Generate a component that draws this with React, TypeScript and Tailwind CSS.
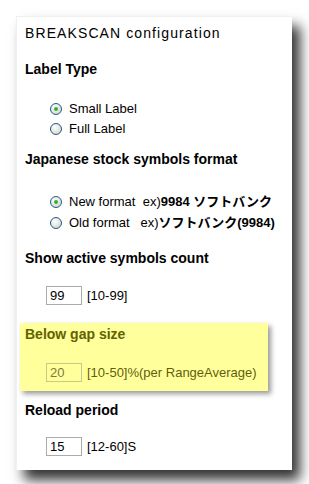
import type { ReactNode } from "react";

const FONT = "font-['Liberation_Sans','Noto_Sans_CJK_JP',Arial,sans-serif]";

function Radio({ checked }: { checked?: boolean }) {
	return (
		<svg width="12" height="12" viewBox="0 0 12 12" className="shrink-0">
			<defs>
				<radialGradient id={checked ? "rg-on" : "rg-off"} cx="0.4" cy="0.35" r="0.7">
					<stop offset="0" stopColor="#ffffff" />
					<stop offset="1" stopColor="#d4d4cc" />
				</radialGradient>
			</defs>
			<circle cx="6" cy="6" r="5.5" fill={`url(#${checked ? "rg-on" : "rg-off"})`} stroke="#2a5a8a" strokeWidth="1" />
			{checked && <circle cx="6" cy="6" r="2" fill="#2fb42f" />}
		</svg>
	);
}

function RadioRow({ checked, h, children }: { checked?: boolean; h: string; children: ReactNode }) {
	return (
		<div className={`flex items-center ${h} pl-[33px]`}>
			<Radio checked={checked} />
			<span className="ml-[7px] whitespace-pre text-[13px] leading-[20px] text-black">{children}</span>
		</div>
	);
}

function Heading({ children, className = "" }: { children: ReactNode; className?: string }) {
	return <div className={`text-[14px] font-bold leading-[16px] ${className}`}>{children}</div>;
}

function NumberField({ value, hint, disabled }: { value: string; hint: ReactNode; disabled?: boolean }) {
	return (
		<div className="flex items-center pl-[21px]">
			<div
				className={`flex h-[19px] w-[36px] items-center border pl-[3px] text-[13px] ${
					disabled ? "border-[#c9c98a] text-[#7a7a3a]" : "border-[#a5acb2] bg-white text-black"
				}`}
			>
				{value}
			</div>
			<span className={`ml-[5px] whitespace-pre text-[13px] ${disabled ? "text-[#5f5f0a]" : "text-black"}`}>{hint}</span>
		</div>
	);
}

export default function App() {
	return (
		<div className={`min-h-[484px] w-[309px] bg-white pl-4 pt-4 ${FONT}`}>
			<div className="w-[276px] border-l border-t border-[#f0f0f0] bg-white pb-[13px] pt-[8px] shadow-[8px_10px_12px_rgba(0,0,0,0.8)]">
				<div className="pl-[8px] text-[14px] leading-[16px] tracking-[1.1px] text-black">BREAKSCAN configuration</div>

				<Heading className="mt-[20px] pl-[8px]">Label Type</Heading>
				<div className="mt-[22px]">
					<RadioRow checked h="h-[20px]">Small Label</RadioRow>
					<RadioRow h="h-[20px]">Full Label</RadioRow>
				</div>

				<Heading className="mt-[12px] pl-[8px]">Japanese stock symbols format</Heading>
				<div className="mt-[24px]">
					<RadioRow checked h="h-[21px]">
						{"New format  ex)"}
						<b>9984 ソフトバンク</b>
					</RadioRow>
					<RadioRow h="h-[21px]">
						{"Old format   ex)"}
						<b>ソフトバンク(9984)</b>
					</RadioRow>
				</div>

				<Heading className="mt-[17px] pl-[8px]">Show active symbols count</Heading>
				<div className="mt-[20px] pl-[8px]">
					<NumberField value="99" hint="[10-99]" />
				</div>

				<div className="ml-[3px] mt-[17px] w-[248px] bg-[#ffff9c] pb-[9px] pl-[5px] pt-[3px] shadow-[3px_3px_5px_rgba(0,0,0,0.4)]">
					<Heading className="text-[#626200]">Below gap size</Heading>
					<div className="mt-[21px]">
						<NumberField value="20" hint="[10-50]%(per RangeAverage)" disabled />
					</div>
				</div>

				<Heading className="mt-[11px] pl-[8px]">Reload period</Heading>
				<div className="mt-[19px] pl-[8px]">
					<NumberField value="15" hint="[12-60]S" />
				</div>
			</div>
		</div>
	);
}
